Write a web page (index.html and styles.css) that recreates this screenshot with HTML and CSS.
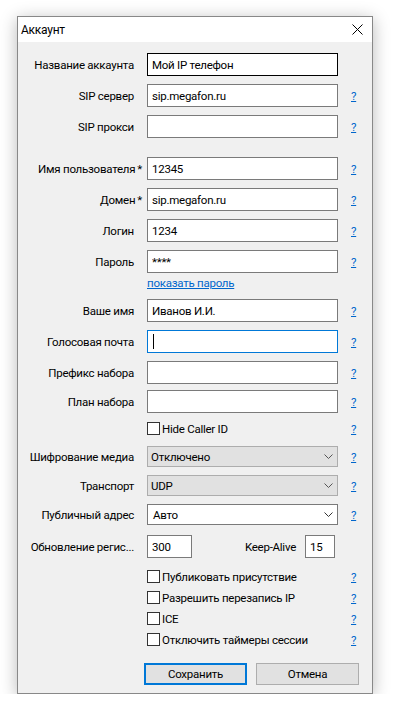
FILE: index.html
```html
<!DOCTYPE html>
<html lang="ru">
<head>
  <meta charset="UTF-8">
  <meta name="viewport" content="width=device-width, initial-scale=1.0">
  <title>Аккаунт</title>
  <link rel="stylesheet" href="styles.css">
</head>
<body>
  <div class="dialog">
    <div class="titlebar">
      <span class="title">Аккаунт</span>
      <span class="close">
        <svg width="11" height="11" viewBox="0 0 11 11"><path d="M0.5 0.5L10.5 10.5M10.5 0.5L0.5 10.5" stroke="#000" stroke-width="1"/></svg>
      </span>
    </div>

    <div class="form">
      <div class="row first">
        <label>Название аккаунта</label>
        <input type="text" class="dark" value="Мой IP телефон">
      </div>
      <div class="row">
        <label>SIP сервер</label>
        <input type="text" value="sip.megafon.ru">
        <a class="help" href="#">?</a>
      </div>
      <div class="row">
        <label>SIP прокси</label>
        <input type="text" value="">
        <a class="help" href="#">?</a>
      </div>

      <div class="row sep">
        <label class="req">Имя пользователя</label>
        <input type="text" value="12345">
        <a class="help" href="#">?</a>
      </div>
      <div class="row">
        <label class="req">Домен</label>
        <input type="text" value="sip.megafon.ru">
        <a class="help" href="#">?</a>
      </div>
      <div class="row">
        <label>Логин</label>
        <input type="text" value="1234">
        <a class="help" href="#">?</a>
      </div>
      <div class="row">
        <label>Пароль</label>
        <input type="text" value="****">
        <a class="help" href="#">?</a>
      </div>
      <div class="link-row">
        <span></span>
        <a href="#">показать пароль</a>
      </div>

      <div class="row">
        <label>Ваше имя</label>
        <input type="text" value="Иванов И.И.">
        <a class="help" href="#">?</a>
      </div>
      <div class="row">
        <label>Голосовая почта</label>
        <div class="focused"><span class="caret"></span></div>
        <a class="help" href="#">?</a>
      </div>
      <div class="row">
        <label>Префикс набора</label>
        <input type="text" value="">
        <a class="help" href="#">?</a>
      </div>
      <div class="row near">
        <label>План набора</label>
        <input type="text" value="">
        <a class="help" href="#">?</a>
      </div>
      <div class="check-row hide-id">
        <span></span>
        <div class="check"><span class="box"></span>Hide Caller ID</div>
        <a class="help" href="#">?</a>
      </div>

      <div class="row select">
        <label>Шифрование медиа</label>
        <div class="combo">Отключено<svg width="9" height="5" viewBox="0 0 9 5"><path d="M0.5 0.5L4.5 4.5L8.5 0.5" fill="none" stroke="#555"/></svg></div>
        <a class="help" href="#">?</a>
      </div>
      <div class="row select">
        <label>Транспорт</label>
        <div class="combo">UDP<svg width="9" height="5" viewBox="0 0 9 5"><path d="M0.5 0.5L4.5 4.5L8.5 0.5" fill="none" stroke="#555"/></svg></div>
        <a class="help" href="#">?</a>
      </div>
      <div class="row select">
        <label>Публичный адрес</label>
        <div class="combo edit">Авто<svg width="9" height="5" viewBox="0 0 9 5"><path d="M0.5 0.5L4.5 4.5L8.5 0.5" fill="none" stroke="#333"/></svg></div>
        <a class="help" href="#">?</a>
      </div>
      <div class="row wide">
        <label>Обновление регис...</label>
        <div class="pair">
          <input type="text" class="short" value="300">
          <span class="pair-label">Keep-Alive</span>
          <input type="text" class="tiny" value="15">
        </div>
      </div>

      <div class="check-row list first-check">
        <span></span>
        <div class="check"><span class="box"></span>Публиковать присутствие</div>
        <a class="help" href="#">?</a>
      </div>
      <div class="check-row list">
        <span></span>
        <div class="check"><span class="box"></span>Разрешить перезапись IP</div>
        <a class="help" href="#">?</a>
      </div>
      <div class="check-row list">
        <span></span>
        <div class="check"><span class="box"></span>ICE</div>
        <a class="help" href="#">?</a>
      </div>
      <div class="check-row list">
        <span></span>
        <div class="check"><span class="box"></span>Отключить таймеры сессии</div>
        <a class="help" href="#">?</a>
      </div>

      <div class="buttons">
        <button class="default">Сохранить</button>
        <button>Отмена</button>
      </div>
    </div>
  </div>
</body>
</html>
```

FILE: styles.css
```css
body {
  margin: 0;
  background: #fff;
  font-family: Roboto, "Noto Sans", sans-serif;
  font-size: 11.5px;
  letter-spacing: -0.25px;
  color: #000;
}

.dialog {
  width: 356px;
  margin: 16px 0 0 17px;
  box-sizing: border-box;
  border: 1px solid #888;
  background: #f0f0f0;
  box-shadow: 0 3px 16px rgba(0,0,0,0.28);
}

.titlebar {
  height: 25px;
  background: #fff;
  display: flex;
  align-items: center;
  justify-content: space-between;
  padding: 0 9px 0 3px;
  font-size: 12px;
}

.close {
  display: flex;
  margin-top: -1px;
}

.form {
  padding: 11px 0 8px;
}

.row, .link-row, .check-row {
  display: grid;
  grid-template-columns: 129px 191px 1fr;
  align-items: center;
}

.row {
  height: 23px;
  margin-top: 8px;
}

.row.first { margin-top: 0; }
.row.sep { margin-top: 19px; }
.row.near { margin-top: 6px; }
.row.wide { margin-top: 10px; }
.row.select { height: 21px; }

.row label {
  text-align: right;
  padding-right: 13px;
  white-space: nowrap;
}

.row label.req::after {
  content: "*";
  margin: 0 -8px 0 2px;
}

input {
  height: 23px;
  box-sizing: border-box;
  border: 1px solid #7a7a7a;
  background: #fff;
  font: inherit;
  letter-spacing: inherit;
  color: #000;
  padding: 0 4px;
  margin: 0;
  width: 100%;
  outline: none;
}

input.dark {
  border-color: #000;
}

.focused {
  height: 23px;
  box-sizing: border-box;
  border: 1px solid #0078d7;
  background: #fff;
  padding: 3px 5px;
}

.caret {
  display: block;
  width: 1px;
  height: 15px;
  background: #000;
}

.help {
  padding-left: 13px;
  color: #0066cc;
  justify-self: start;
}

.link-row {
  margin: 2px 0 1px;
  height: 16px;
}

.link-row a {
  color: #0066cc;
}

.combo {
  height: 21px;
  box-sizing: border-box;
  border: 1px solid #adadad;
  background: #e1e1e1;
  display: flex;
  align-items: center;
  justify-content: space-between;
  padding: 0 4px 0 3px;
}

.combo.edit {
  background: #fff;
  border-color: #7a7a7a;
  padding-left: 5px;
}

.pair {
  display: flex;
  align-items: center;
  padding-right: 3px;
}

input.short {
  width: 45px;
  flex: none;
}

input.tiny {
  width: 30px;
  flex: none;
}

.pair-label {
  flex: 1;
  text-align: right;
  padding-right: 9px;
}

.check-row {
  height: 21px;
}

.check-row.hide-id {
  height: 19px;
  margin-top: 6px;
}

.check-row.first-check {
  margin-top: 8px;
}

.check {
  display: flex;
  align-items: center;
  white-space: nowrap;
}

.box {
  width: 13px;
  height: 13px;
  box-sizing: border-box;
  border: 1px solid #333;
  background: #fff;
  margin-right: 2px;
}

.buttons {
  display: flex;
  gap: 9px;
  padding-left: 126px;
  margin-top: 13px;
}

button {
  width: 103px;
  height: 22px;
  box-sizing: border-box;
  border: 1px solid #adadad;
  background: #e1e1e1;
  font: inherit;
  letter-spacing: inherit;
  color: #000;
  padding: 0;
}

button.default {
  border: 2px solid #0078d7;
}
```
